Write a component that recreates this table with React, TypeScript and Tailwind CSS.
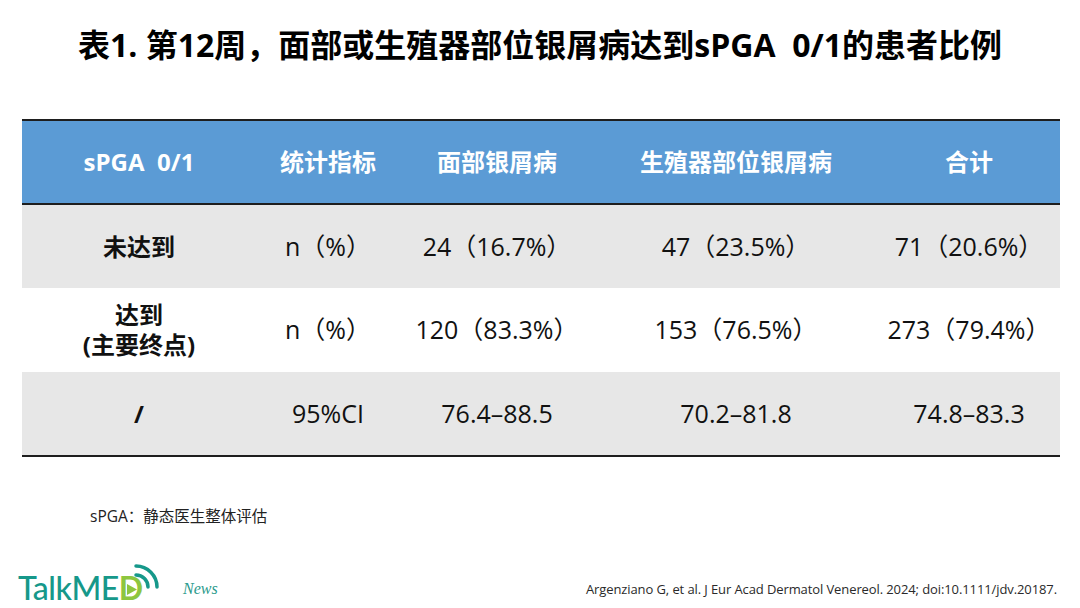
import React from "react";

const FONT = { fontFamily: '"Open Sans", "Noto Sans CJK SC", sans-serif' };

const cols = "grid grid-cols-[234px_144px_194px_284px_182px]";

function Cell({ children, bold = false }: { children: React.ReactNode; bold?: boolean }) {
  return (
    <div
      className={`flex items-center justify-center text-center whitespace-pre ${
        bold ? "font-bold text-[24px] leading-[30px]" : "text-[25px]"
      }`}
    >
      {children}
    </div>
  );
}

export default function App() {
  const rows: { bg: string; cells: React.ReactNode[] }[] = [
    {
      bg: "bg-[#e7e7e7]",
      cells: ["未达到", "n（%）", "24（16.7%）", "47（23.5%）", "71（20.6%）"],
    },
    {
      bg: "bg-white",
      cells: [
        <span>
          达到
          <br />
          (主要终点)
        </span>,
        "n（%）",
        "120（83.3%）",
        "153（76.5%）",
        "273（79.4%）",
      ],
    },
    {
      bg: "bg-[#e7e7e7]",
      cells: ["/", "95%CI", "76.4–88.5", "70.2–81.8", "74.8–83.3"],
    },
  ];

  return (
    <div className="w-[1080px] h-[608px] bg-white text-[#111] flex flex-col overflow-hidden" style={FONT}>
      <h1 className="mt-[25px] text-center text-[32px] leading-[40px] font-bold text-black whitespace-pre">
        表1. 第12周，面部或生殖器部位银屑病达到sPGA  0/1的患者比例
      </h1>

      <div className="mt-[54px] mx-[22px] w-[1038px] border-t-2 border-b-2 border-[#1e1e1e]">
        <div className={`${cols} h-[84px] bg-[#5b9bd5] text-white font-bold text-[24px] border-b-2 border-[#1e1e1e]`}>
          {["sPGA  0/1", "统计指标", "面部银屑病", "生殖器部位银屑病", "合计"].map((t, i) => (
            <div key={i} className="flex items-center justify-center whitespace-pre">
              {t}
            </div>
          ))}
        </div>
        {rows.map((r, ri) => (
          <div key={ri} className={`${cols} ${r.bg} ${ri === 1 ? "h-[84px]" : "h-[83px]"}`}>
            {r.cells.map((c, ci) => (
              <Cell key={ci} bold={ci === 0}>
                {c}
              </Cell>
            ))}
          </div>
        ))}
      </div>

      <div className="mt-[48px] ml-[90px] text-[15.5px] text-[#222]">sPGA：静态医生整体评估</div>

      <div className="mt-[33px] flex items-end">
        <div className="ml-[18px] relative flex items-end h-[44px] w-[160px]">
          <span
            className="text-[32px] leading-[34px] font-medium text-[#16988a] tracking-[-0.5px]"
            style={{ fontFamily: "Lato, sans-serif" }}
          >
            TalkME
          </span>
          <span
            className="relative text-[32px] leading-[34px] font-bold text-[#8dc63f]"
            style={{ fontFamily: "Lato, sans-serif" }}
          >
            D
            <svg className="absolute left-[7px] top-[12px]" width="12" height="13" viewBox="0 0 12 13">
              <path d="M1 1 L11 6.5 L1 12 Z" fill="#8dc63f" />
            </svg>
          </span>
          <svg className="absolute left-0 top-0" width="160" height="44" viewBox="0 0 160 44">
            <path d="M118 14 A12 12 0 0 1 130 26" fill="none" stroke="#16988a" strokeWidth="3.5" strokeLinecap="round" />
            <path d="M118 5 A21 21 0 0 1 139 26" fill="none" stroke="#16988a" strokeWidth="3.5" strokeLinecap="round" />
          </svg>
        </div>
        <span
          className="ml-[5px] mb-[4px] text-[16px] italic text-[#2a9a8c]"
          style={{ fontFamily: '"Liberation Serif", serif' }}
        >
          News
        </span>
        <span className="ml-auto mr-[23px] mb-[6px] text-[13px] tracking-[-0.1px] text-[#2a2a2a]">
          Argenziano G, et al. J Eur Acad Dermatol Venereol. 2024; doi:10.1111/jdv.20187.
        </span>
      </div>
    </div>
  );
}
